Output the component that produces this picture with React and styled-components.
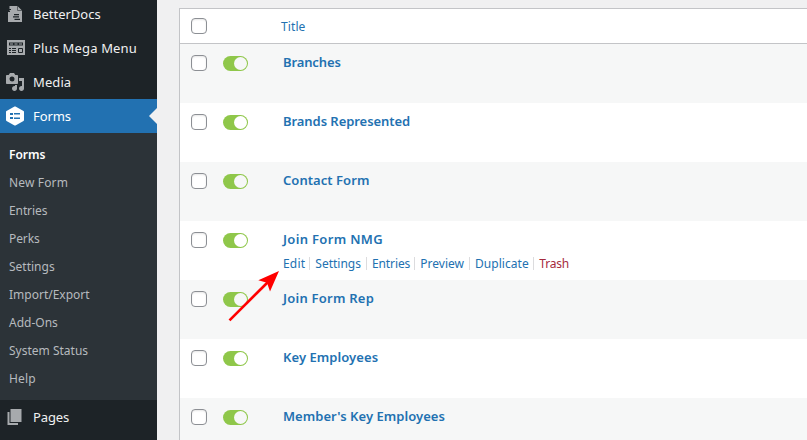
import React from "react";
import styled, { createGlobalStyle } from "styled-components";

const GlobalStyle = createGlobalStyle`
  * { box-sizing: border-box; }
  body {
    margin: 0;
    overflow: hidden;
    background: #f0f0f1;
    font-family: "Noto Sans", "Open Sans", sans-serif;
    font-size: 13px;
  }
  a { text-decoration: none; }
`;

const Page = styled.div`
  position: relative;
  display: flex;
  width: 807px;
  height: 440px;
  overflow: hidden;
`;

const Sidebar = styled.nav`
  flex: 0 0 157px;
  height: 440px;
  overflow: hidden;
  background: #1d2327;
`;

const MenuList = styled.div`
  margin-top: -3px;
`;

const MenuItem = styled.a`
  position: relative;
  display: flex;
  align-items: center;
  height: 34px;
  color: ${(p) => (p.$active ? "#fff" : "#f0f0f1")};
  background: ${(p) => (p.$active ? "#2271b1" : "transparent")};
  white-space: nowrap;
  letter-spacing: ${(p) => p.$track || 0}px;

  &::after {
    content: "";
    display: ${(p) => (p.$active ? "block" : "none")};
    position: absolute;
    right: 0;
    top: 9px;
    border: 8px solid transparent;
    border-left-width: 0;
    border-right-color: #f0f0f1;
  }
`;

const IconSlot = styled.span`
  display: flex;
  flex: 0 0 33px;
  height: 34px;
  padding: 7px 0 0 5px;
`;

const Submenu = styled.div`
  display: flex;
  flex-direction: column;
  height: 267px;
  padding: 8px 0 7px 9px;
  background: #2c3338;
`;

const SubItem = styled.a`
  height: 28px;
  font-size: 12px;
  line-height: 28px;
  white-space: nowrap;
  letter-spacing: ${(p) => p.$track || 0}px;
  color: ${(p) => (p.$current ? "#fff" : "#b6babe")};
  font-weight: ${(p) => (p.$current ? 600 : 400)};
`;

const Content = styled.main`
  flex: 1;
  padding: 8px 0 0 22px;
`;

const Table = styled.div`
  width: 700px;
  border: 1px solid #c3c4c7;
  background: #fff;
`;

const HeaderRow = styled.div`
  display: flex;
  height: 35px;
  padding: 9px 0 0 11px;
  border-bottom: 1px solid #c3c4c7;
`;

const HeaderTitle = styled.a`
  margin-left: 74px;
  font-size: 12px;
  line-height: 17px;
  letter-spacing: 0.1px;
  color: #2271b1;
`;

const Row = styled.div`
  display: flex;
  height: 59px;
  padding: 11px 0 0 11px;
  background: ${(p) => (p.$striped ? "#f6f7f7" : "#fff")};
`;

const Checkbox = styled.span`
  flex: 0 0 16px;
  height: 16px;
  border: 1px solid #8c8f94;
  border-radius: 4px;
  background: #fff;
  box-shadow: inset 0 1px 2px rgba(0, 0, 0, 0.1);
`;

const Toggle = styled.span`
  display: flex;
  justify-content: flex-end;
  flex: 0 0 25px;
  height: 15px;
  margin: 1px 0 0 16px;
  padding: 1px;
  border-radius: 8px;
  background: #8fc74a;

  &::after {
    content: "";
    width: 13px;
    height: 13px;
    border-radius: 50%;
    background: ${(p) => (p.$striped ? "#f6f7f7" : "#fff")};
  }
`;

const Cell = styled.div`
  display: flex;
  flex-direction: column;
  margin: -4px 0 0 35px;
`;

const FormTitle = styled.a`
  font-weight: 600;
  line-height: 22px;
  height: 22px;
  color: #2271b1;
  white-space: nowrap;
  letter-spacing: ${(p) => p.$track || 0}px;
`;

const Actions = styled.div`
  display: flex;
  height: 20px;
  margin-top: 5px;
  font-size: 12px;
  line-height: 18px;
  white-space: nowrap;
`;

const Action = styled.a`
  width: ${(p) => p.$width}px;
  letter-spacing: ${(p) => p.$track || 0}px;
  color: ${(p) => (p.$danger ? "#a52a3c" : "#2271b1")};
`;

const Divider = styled.span`
  width: 1px;
  height: 13px;
  margin: 2px 5px 0 4px;
  background: #dcdcde;
`;

const Arrow = styled.svg`
  position: absolute;
  left: 224px;
  top: 266px;
`;

const DocIcon = () => (
  <svg width="20" height="20" viewBox="0 0 20 20">
    <path fill="#a7aaad" d="M4.500 2H12.500l4.500 4.500V18H3V7.500h1.500z" />
    <path fill="#1d2327" d="M3 5h3v1H3zM3 7h2v1H3zM9 10h5v1.200H9zM8 12.300h6v1.200H8zM9.500 14.700H15v1.200H9.500z" />
    <path stroke="#5a5f63" fill="none" d="M12.500 2v4.500H17" />
  </svg>
);

const MegaIcon = () => (
  <svg width="20" height="20" viewBox="0 0 20 20">
    <path fill="#a7aaad" d="M2 2h18v15H2z" />
    <path fill="#1d2327" d="M4 4.500h14v3H4zM4 10h2v1H4zM7 10h4v1H7zM4 12h2v1H4zM7 12h4v1H7zM4 14h2v1H4zM7 14h4v1H7z" />
    <path fill="#a7aaad" d="M5 5.500h3v1H5zM9.500 5.500h3v1h-3zM14 5.500h3v1h-3z" />
    <path fill="none" stroke="#1d2327" d="M13.500 10.500h4v4h-4z" />
  </svg>
);

const MediaIcon = () => (
  <svg width="20" height="20" viewBox="0 0 20 20" fill="#a7aaad">
    <path fillRule="evenodd" d="M13 11V4c0-.55-.45-1-1-1h-1.670L9 1H5L3.670 3H2c-.55 0-1 .45-1 1v7c0 .55.45 1 1 1h10c.55 0 1-.45 1-1zM7 4.500a2.500 2.500 0 1 1 0 5 2.500 2.500 0 0 1 0-5zM14 6h5v10.500c0 1.380-1.120 2.500-2.500 2.500S14 17.880 14 16.500s1.120-2.500 2.500-2.500c.17 0 .34.020.5.050V9h-3V6zm-4 8.050V13h2v3.500c0 1.380-1.120 2.500-2.500 2.500S7 17.880 7 16.500 8.120 14 9.500 14c.17 0 .34.020.5.050z" />
  </svg>
);

const FormsIcon = () => (
  <svg width="20" height="20" viewBox="0 0 20 20">
    <path fill="#fff" stroke="#fff" strokeWidth="2" strokeLinejoin="round" d="M10 1.500L18 5.900V14.100L10 18.500L2 14.100V5.900z" />
    <path fill="#2271b1" d="M5 7h3v2H5zM9 7h6v1.500H9zM5 11h3v2H5zM9 11.500h6V13H9z" />
  </svg>
);

const PagesIcon = () => (
  <svg width="20" height="20" viewBox="0 0 20 20" fill="#a7aaad">
    <path d="M5.500 15V2h11v13zM5 16h8v2H2.500V5H4.500v11z" />
  </svg>
);

const TOP_ITEMS = [
  { label: "BetterDocs", Icon: DocIcon },
  { label: "Plus Mega Menu", Icon: MegaIcon, track: 0.15 },
  { label: "Media", Icon: MediaIcon, track: 0.1 },
  { label: "Forms", Icon: FormsIcon, active: true, track: -0.1 },
];

const SUB_ITEMS = [
  { label: "Forms", current: true, track: -0.05 },
  { label: "New Form", track: 0.15 },
  { label: "Entries", track: -0.1 },
  { label: "Perks", track: -0.1 },
  { label: "Settings" },
  { label: "Import/Export" },
  { label: "Add-Ons" },
  { label: "System Status" },
  { label: "Help", track: 0.2 },
];

const FORMS = [
  { title: "Branches", track: -0.12 },
  { title: "Brands Represented", track: -0.06 },
  { title: "Contact Form", track: 0.05 },
  { title: "Join Form NMG", open: true, track: 0.33 },
  { title: "Join Form Rep", track: 0.23 },
  { title: "Key Employees", track: 0.06 },
  { title: "Member's Key Employees", track: 0.04 },
];

const ACTIONS = [
  { label: "Edit", width: 22.3, track: 0.2 },
  { label: "Settings", width: 46.7 },
  { label: "Entries", width: 38.3, track: -0.1 },
  { label: "Preview", width: 44.7 },
  { label: "Duplicate", width: 54.3, track: 0.05 },
  { label: "Trash", width: 32, danger: true, track: -0.2 },
];

const Item = ({ label, Icon, active, track }) => (
  <MenuItem $active={active} $track={track}>
    <IconSlot><Icon /></IconSlot>
    {label}
  </MenuItem>
);

export default function App() {
  return (
    <Page>
      <GlobalStyle />
      <Sidebar>
        <MenuList>
          {TOP_ITEMS.map((item) => <Item key={item.label} {...item} />)}
          <Submenu>
            {SUB_ITEMS.map((s) => (
              <SubItem key={s.label} $current={s.current} $track={s.track}>{s.label}</SubItem>
            ))}
          </Submenu>
          <Item label="Pages" Icon={PagesIcon} track={-0.1} />
        </MenuList>
      </Sidebar>
      <Content>
        <Table>
          <HeaderRow>
            <Checkbox />
            <HeaderTitle>Title</HeaderTitle>
          </HeaderRow>
          {FORMS.map((f, i) => (
            <Row key={f.title} $striped={i % 2 === 0}>
              <Checkbox />
              <Toggle $striped={i % 2 === 0} />
              <Cell>
                <FormTitle $track={f.track}>{f.title}</FormTitle>
                {f.open && (
                  <Actions>
                    {ACTIONS.map((a, n) => (
                      <React.Fragment key={a.label}>
                        {n > 0 && <Divider />}
                        <Action $width={a.width} $danger={a.danger} $track={a.track}>{a.label}</Action>
                      </React.Fragment>
                    ))}
                  </Actions>
                )}
              </Cell>
            </Row>
          ))}
        </Table>
      </Content>
      <Arrow width="60" height="60" viewBox="224 266 60 60">
        <path d="M229.500 320.300L268 282" stroke="#f00" strokeWidth="2.600" />
        <path d="M279 271L258.300 280.300L267 282.700L270 291.500z" fill="#f00" />
      </Arrow>
    </Page>
  );
}
